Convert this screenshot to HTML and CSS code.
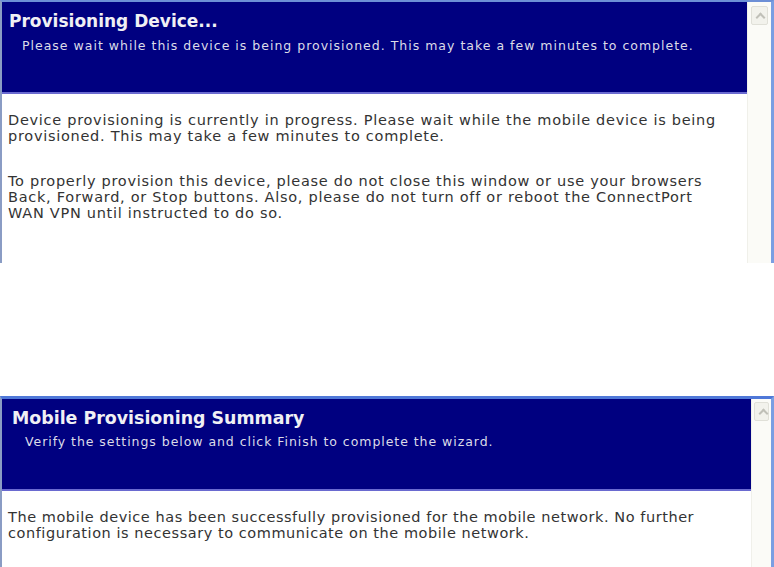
FILE: index.html
```html
<!DOCTYPE html>
<html lang="en">
<head>
    <meta charset="UTF-8">
    <title>Provisioning</title>
    <link rel="stylesheet" href="styles.css">
</head>
<body>
    <div class="frame first">
        <div class="page">
            <div class="banner">
                <h1>Provisioning Device...</h1>
                <div class="sub">Please wait while this device is being provisioned. This may take a few minutes to complete.</div>
            </div>
            <div class="content">
                <p>Device provisioning is currently in progress. Please wait while the mobile device is being provisioned. This may take a few minutes to complete.</p>
                <p>To properly provision this device, please do not close this window or use your browsers Back, Forward, or Stop buttons. Also, please do not turn off or reboot the ConnectPort WAN VPN until instructed to do so.</p>
            </div>
        </div>
        <div class="scroll"><div class="arrow"></div></div>
    </div>

    <div class="frame second">
        <div class="page">
            <div class="banner">
                <h1>Mobile Provisioning Summary</h1>
                <div class="sub">Verify the settings below and click Finish to complete the wizard.</div>
            </div>
            <div class="content">
                <p>The mobile device has been successfully provisioned for the mobile network. No further configuration is necessary to communicate on the mobile network.</p>
            </div>
        </div>
        <div class="scroll"><div class="arrow"></div></div>
    </div>
</body>
</html>
```

FILE: styles.css
```css
body {
    margin: 0;
    background: #fff;
    font-family: "DejaVu Sans", Verdana, sans-serif;
}
.frame {
    display: flex;
    width: 769px;
    border-top: 2px solid #6d8fd6;
    border-left: 2px solid #8a9cc4;
    border-right: 3px solid #7a9ee2;
    overflow: hidden;
}
.first { height: 261px; }
.second {
    margin-top: 133px;
    height: 171px;
    border-top: 3px solid #4f78d8;
}
.page {
    flex: 1;
    display: flex;
    flex-direction: column;
    background: #fff;
}
.banner {
    background: #000080;
    color: #dcdce8;
    height: 92px;
    padding: 9px 0 0 7px;
    box-sizing: border-box;
    border-bottom: 2px solid #6a6ad0;
}
.second .banner { height: 92px; padding: 9px 0 0 10px; }
h1 {
    margin: 0;
    font-size: 17px;
    line-height: 21px;
    font-weight: bold;
    color: #f0f0f4;
}
.second h1 { font-size: 17.4px; }
.sub {
    margin: 6px 0 0 13px;
    font-size: 12.5px;
    letter-spacing: 1px;
}
.second .sub { margin-top: 5px; letter-spacing: 0.95px; }
.content {
    padding: 18px 22px 0 6px;
    color: #333;
    font-size: 14.5px;
    line-height: 16px;
    letter-spacing: 0.72px;
}
.content p { margin: 0 0 29px; }
.second .content { padding: 18px 30px 0 6px; letter-spacing: 0.55px; }
.scroll {
    width: 24px;
    background: #fbfbf7;
    border-left: 1px solid #f0f0ea;
    padding: 4px 3px;
    box-sizing: border-box;
}
.second .scroll { width: 20px; padding: 3px 2px; }
.arrow {
    height: 17px;
    border: 1px solid #e0e0d8;
    border-radius: 2px;
    background: #f2f2ec;
    position: relative;
}
.arrow::after {
    content: "";
    position: absolute;
    left: 5px;
    top: 7px;
    width: 5px;
    height: 5px;
    border-top: 2px solid #c0c0b8;
    border-left: 2px solid #c0c0b8;
    transform: rotate(45deg);
}
```
